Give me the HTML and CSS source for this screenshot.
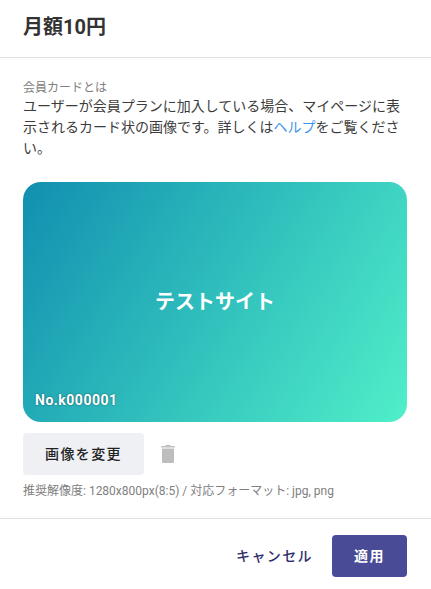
FILE: index.html
```html
<!DOCTYPE html>
<html lang="ja">
<head>
<meta charset="utf-8">
<title>会員カード</title>
<link rel="stylesheet" href="styles.css">
</head>
<body>
<div class="modal">
  <header class="head"><h1 class="title">月額10円</h1></header>
  <main class="content">
    <div class="label">会員カードとは</div>
    <p class="desc">ユーザーが会員プランに加入している場合、マイページに表示されるカード状の画像です。詳しくは<a class="link" href="#">ヘルプ</a>をご覧ください。</p>
    <div class="card">
      <div class="card-name">テストサイト</div>
      <div class="card-no">No.k000001</div>
    </div>
    <div class="actions">
      <button class="btn-change">画像を変更</button>
      <svg class="trash" viewBox="0 0 14 18" width="14" height="18"><path d="M5 0h4l.6 1H14v1.500H0V1h4.400zM1 3.500h12v13A1.500 1.500 0 0 1 11.500 18h-9A1.500 1.500 0 0 1 1 16.500z"/></svg>
    </div>
    <div class="hint">推奨解像度: 1280x800px(8:5) / 対応フォーマット: jpg, png</div>
  </main>
  <footer class="foot">
    <button class="btn-cancel">キャンセル</button>
    <button class="btn-apply">適用</button>
  </footer>
</div>
</body>
</html>
```

FILE: styles.css
```css
* { box-sizing: border-box; }
html, body { margin: 0; padding: 0; background: #fff; }
body { font-family: Roboto, "Noto Sans CJK JP", sans-serif; color: #333; width: 431px; height: 589px; overflow: hidden; }
.modal { display: flex; flex-direction: column; height: 589px; }
.head { height: 58px; border-bottom: 1px solid #e2e2e2; padding: 15px 23px 0; }
.title { margin: 0; font-size: 20px; line-height: 24px; font-weight: 700; color: #333; }
.content { padding: 21px 24px 0 23px; height: 461px; border-bottom: 1px solid #e2e2e2; }
.label { font-size: 12px; line-height: 18px; color: #808080; }
.desc { margin: -1px 0 0; font-size: 14px; line-height: 21px; color: #3c3c3c; }
.link { color: #3d94ee; text-decoration: none; }
.card { margin-top: 23px; width: 384px; height: 240px; border-radius: 18px; background: linear-gradient(122deg, #118fb0, #50efc9); display: flex; align-items: center; justify-content: center; position: relative; color: #fff; }
.card-name { font-size: 20px; font-weight: 700; padding-bottom: 3px; }
.card-no { position: absolute; left: 12px; bottom: 13px; font-size: 14px; line-height: 18px; font-weight: 700; letter-spacing: .5px; text-shadow: 0 0 2px rgba(0,0,0,.5); }
.actions { display: flex; align-items: center; margin-top: 11px; gap: 17px; }
.btn-change { width: 121px; height: 42px; border: 0; border-radius: 4px; background: #eef0f4; font: 500 14px Roboto, "Noto Sans CJK JP", sans-serif; letter-spacing: 1.4px; color: #222; padding: 0 0 3px; }
.trash { fill: #bdbdbd; display: block; }
.hint { margin-top: 8px; font-size: 12px; line-height: 16px; color: #808080; }
.foot { display: flex; justify-content: flex-end; align-items: center; gap: 20px; padding: 16px 24px 0 0; }
.btn-cancel { border: 0; background: none; padding: 0 0 3px; margin-right: -1px; font: 500 14px Roboto, "Noto Sans CJK JP", sans-serif; letter-spacing: 1.4px; color: #2d2f6b; }
.btn-apply { width: 75px; height: 42px; border: 0; border-radius: 4px; background: #4a4b96; color: #fff; font: 700 14px Roboto, "Noto Sans CJK JP", sans-serif; letter-spacing: 1.4px; padding: 0 0 3px; }
```
